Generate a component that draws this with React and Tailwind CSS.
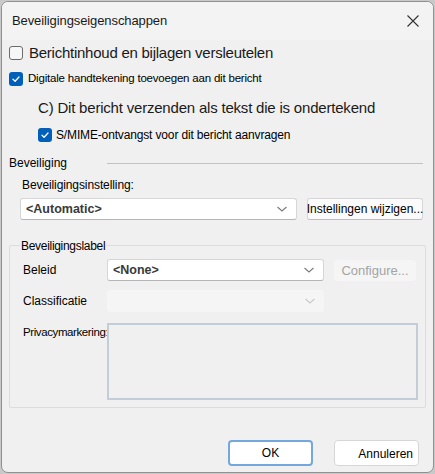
import React from "react"

const font = { fontFamily: '"Liberation Sans", Arial, sans-serif' }

function Check({ checked }) {
  if (checked) {
    return (
      <span className="flex h-[14px] w-[14px] shrink-0 items-center justify-center rounded-[3px] bg-[#005fb8]">
        <svg width="10" height="10" viewBox="0 0 10 10">
          <path d="M2 5.2 L4.1 7.2 L8 3" fill="none" stroke="#ffffff" strokeWidth="1.3" strokeLinecap="round" strokeLinejoin="round" />
        </svg>
      </span>
    )
  }
  return <span className="h-[14px] w-[14px] shrink-0 rounded-[3px] border border-[#6b6b6b] bg-[#f7f7f7]" />
}

function Chevron({ light }) {
  return (
    <svg width="12" height="8" viewBox="0 0 12 8">
      <path d="M1.5 2 L6 6 L10.5 2" fill="none" stroke={light ? "#c8c8c8" : "#7a7a7a"} strokeWidth="1.1" />
    </svg>
  )
}

function Select({ value, disabled, className }) {
  return (
    <div
      className={`flex h-[22px] shrink-0 items-center justify-between rounded-[3px] pl-[5px] pr-[8px] ${
        disabled ? "bg-[#f5f5f5]" : "border border-[#d6d6d6] border-b-[#b5b5b5] bg-white"
      } ${className}`}
    >
      <span className="text-[12.5px] font-bold text-[#3a3a3a]">{value}</span>
      <Chevron light={disabled} />
    </div>
  )
}

export default function App() {
  return (
    <div className="h-[474px] w-[435px] whitespace-nowrap bg-[#c9c9c9] p-px" style={font}>
      <div className="flex h-[472px] w-[433px] flex-col overflow-hidden rounded-[7px] border border-[#909090] bg-[#f0f0f0] text-[12px] text-black">
        {/* title bar */}
        <div className="flex h-[38px] shrink-0 items-center justify-between bg-[#f3f3f3] pl-[10px] pr-[13px]">
          <span className="text-[13px] tracking-[-0.1px] text-[#1a1a1a]">Beveiligingseigenschappen</span>
          <svg width="14" height="14" viewBox="0 0 14 14">
            <path d="M1.5 1.5 L12.5 12.5 M12.5 1.5 L1.5 12.5" stroke="#333" strokeWidth="1.1" />
          </svg>
        </div>

        <div className="flex flex-col px-[7px]">
          <div className="mt-[3px] flex items-center gap-[6px]">
            <Check />
            <span className="text-[15px] leading-[20px] tracking-[-0.25px] text-[#1a1a1a]">
              Berichtinhoud en bijlagen versleutelen
            </span>
          </div>
          <div className="mt-[7px] flex items-center gap-[5px]">
            <Check checked />
            <span className="text-[11.5px] tracking-[-0.2px]">Digitale handtekening toevoegen aan dit bericht</span>
          </div>
          <div className="ml-[29px] mt-[11px] text-[15px] leading-[20px] tracking-[-0.2px] text-[#1a1a1a]">
            C) Dit bericht verzenden als tekst die is ondertekend
          </div>
          <div className="ml-[29px] mt-[8px] flex items-center gap-[4px]">
            <Check checked />
            <span className="text-[12px] tracking-[-0.15px]">S/MIME-ontvangst voor dit bericht aanvragen</span>
          </div>

          <div className="mt-[10px] flex items-center gap-[40px]">
            <span className="text-[12px]">Beveiliging</span>
            <div className="mr-[3px] h-px flex-1 bg-[#c2c2c2]" />
          </div>
          <div className="ml-[13px] mt-[4px] text-[12px] tracking-[-0.1px]">Beveiligingsinstelling:</div>
          <div className="ml-[11px] mt-[4px] flex items-center gap-[10px]">
            <Select value="<Automatic>" className="w-[277px]" />
            <div className="flex h-[22px] w-[116px] items-center justify-center rounded-[3px] border border-[#d6d6d6] border-b-[#bdbdbd] bg-[#fbfbfb] text-[12px]">
              Instellingen wijzigen...
            </div>
          </div>

          {/* Beveiligingslabel group */}
          <div className="relative mt-[25px] h-[163px] rounded-[2px] border border-[#dcdcdc] pl-[13px] pr-[6px] pt-[13px]">
            <span className="absolute left-[10px] top-[-9px] bg-[#f0f0f0] px-px text-[12px] tracking-[-0.3px]">
              Beveiligingslabel
            </span>
            <div className="flex items-center">
              <span className="w-[84px] shrink-0 text-[12px]">Beleid</span>
              <Select value="<None>" className="w-[217px]" />
              <div className="ml-[10px] flex h-[21px] w-[82px] shrink-0 items-center justify-center rounded-[3px] bg-[#f5f5f5] text-[13px] text-[#a4a4a4]">
                Configure...
              </div>
            </div>
            <div className="mt-[9px] flex items-center">
              <span className="w-[84px] shrink-0 text-[12px]">Classificatie</span>
              <Select value="" disabled className="w-[217px]" />
            </div>
            <div className="mt-[11px] flex items-start">
              <span className="mt-px w-[84px] shrink-0 text-[11.5px] tracking-[-0.4px]">Privacymarkering:</span>
              <div className="h-[77px] w-[311px] shrink-0 border-2 border-[#c3cdd8] bg-[#f0f0f0]" />
            </div>
          </div>
        </div>

        <div className="mt-auto mb-[6px] flex justify-end gap-[21px] pr-[14px]">
          <div className="flex h-[26px] w-[85px] items-center justify-center rounded-[4px] border-2 border-[#74a7dc] bg-white text-[12px]">
            OK
          </div>
          <div className="flex h-[26px] w-[85px] items-end justify-end rounded-[4px] border border-[#d6d6d6] bg-white pb-[2px] pr-[5px] text-[12px]">
            Annuleren
          </div>
        </div>
      </div>
    </div>
  )
}
